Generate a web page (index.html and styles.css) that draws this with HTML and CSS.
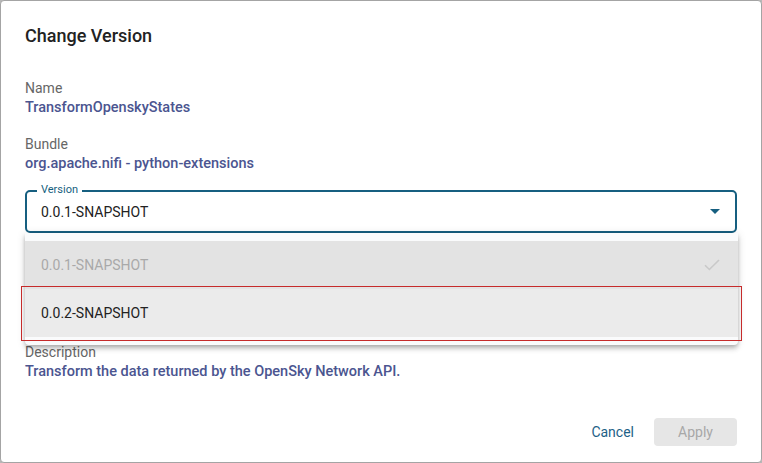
FILE: index.html
```html
<!DOCTYPE html>
<html lang="en">
<head>
<meta charset="utf-8">
<title>Change Version</title>
<link rel="stylesheet" href="styles.css">
</head>
<body>
<div class="dialog">
  <h1 class="title">Change Version</h1>
  <div class="info">
    <div class="group">
      <div class="label">Name</div>
      <div class="value">TransformOpenskyStates</div>
    </div>
    <div class="group">
      <div class="label">Bundle</div>
      <div class="value">org.apache.nifi - python-extensions</div>
    </div>
  </div>
  <div class="field-wrap">
    <div class="field">
      <span class="field-label">Version</span>
      <span class="field-value">0.0.1-SNAPSHOT</span>
      <span class="arrow"></span>
    </div>
    <div class="panel">
      <div class="option selected">
        <span>0.0.1-SNAPSHOT</span>
        <svg class="check" width="16" height="12" viewBox="0 0 16 12"><path d="M1 6.2 L5.4 10.5 L15 1" fill="none" stroke="#c9c9c9" stroke-width="1.6"/></svg>
      </div>
      <div class="option active"><span>0.0.2-SNAPSHOT</span></div>
    </div>
  </div>
  <div class="group desc">
    <div class="label">Description</div>
    <div class="value">Transform the data returned by the OpenSky Network API.</div>
  </div>
  <div class="actions">
    <button class="btn cancel">Cancel</button>
    <button class="btn apply" disabled>Apply</button>
  </div>
</div>
</body>
</html>
```
FILE: styles.css
```css
* { box-sizing: border-box; }
html, body { margin: 0; padding: 0; }
body {
  width: 762px;
  height: 463px;
  background: #b8b8b8;
  font-family: Roboto, "Liberation Sans", Arial, sans-serif;
  overflow: hidden;
}
.dialog {
  width: 762px;
  height: 463px;
  background: #fff;
  border: 1px solid #a4a4a4;
  border-radius: 4px;
  padding: 0 24px 0 24px;
  display: flex;
  flex-direction: column;
}
.title {
  margin: 0;
  padding-top: 24px;
  font-size: 18px;
  line-height: 22px;
  font-weight: 500;
  color: #222;
}
.info {
  margin-top: 31px;
  display: flex;
  flex-direction: column;
  gap: 16px;
}
.group .label {
  font-size: 14px;
  line-height: 20px;
  color: #666;
}
.group .value {
  font-size: 14.5px;
  line-height: 20px;
  font-weight: 500;
  color: #4b5590;
}
.field-wrap {
  position: relative;
  margin-top: 16px;
}
.field {
  position: relative;
  height: 43px;
  border: 2px solid #165f80;
  border-radius: 5px;
  display: flex;
  align-items: center;
  padding: 0 14px 0 14px;
}
.field-label {
  position: absolute;
  left: 10px;
  top: -9px;
  padding: 0 4px;
  background: #fff;
  font-size: 11px;
  line-height: 14px;
  color: #165f80;
}
.field-value {
  flex: 1;
  font-size: 14px;
  color: #222;
}
.arrow {
  width: 0;
  height: 0;
  border-left: 5px solid transparent;
  border-right: 5px solid transparent;
  border-top: 5px solid #165f80;
  margin-right: 1px;
}
.panel {
  position: absolute;
  left: 0;
  right: -1px;
  top: 43px;
  background: #fafbfc;
  padding: 8px 0;
  box-shadow: 0 2px 4px -1px rgba(0,0,0,.2), 0 4px 5px 0 rgba(0,0,0,.14), 0 1px 10px 0 rgba(0,0,0,.12);
  border-radius: 0 0 4px 4px;
  z-index: 2;
}
.option {
  position: relative;
  height: 48px;
  display: flex;
  align-items: center;
  justify-content: space-between;
  padding: 0 18px 0 16px;
  font-size: 14px;
}
.option.selected {
  background: #e3e3e3;
  color: #a9a9a9;
}
.option.active {
  background: #ebebeb;
  color: #222;
}
.option.active::after {
  content: "";
  position: absolute;
  left: -4px;
  right: -4px;
  top: -3px;
  bottom: -4px;
  border: 1px solid #c62b2b;
}
.desc {
  margin-top: 109px;
}
.actions {
  margin-top: auto;
  margin-bottom: 16px;
  display: flex;
  justify-content: flex-end;
  align-items: center;
  gap: 18px;
}
.btn {
  font-family: inherit;
  font-size: 14px;
  border: none;
  border-radius: 4px;
  height: 28px;
  cursor: pointer;
}
.cancel {
  background: transparent;
  color: #1d6187;
  padding: 0 2px;
}
.apply {
  background: #e6e6e6;
  color: #a8a8a8;
  width: 83px;
}
```
